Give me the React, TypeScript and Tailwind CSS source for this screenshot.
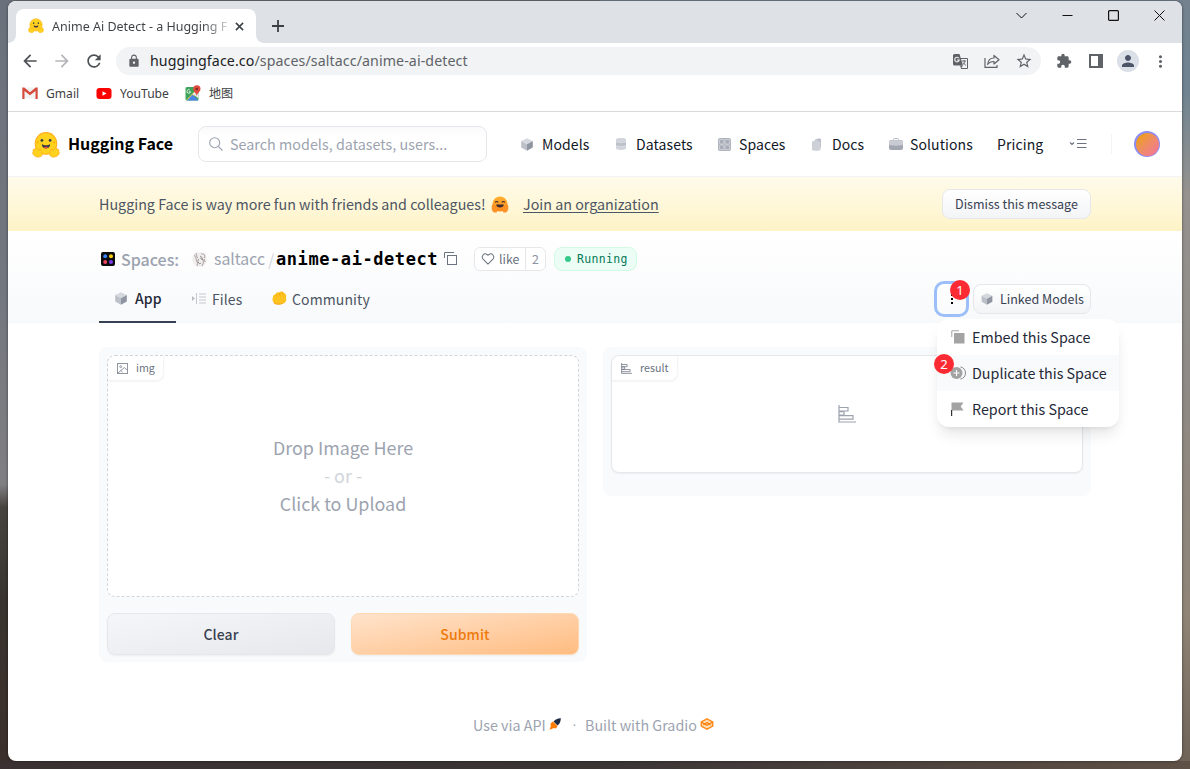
import React from "react";
import {
  MdArrowBack,
  MdArrowForward,
  MdRefresh,
  MdLock,
  MdStarBorder,
  MdExtension,
  MdPerson,
  MdMoreVert,
} from "react-icons/md";

function HugFace({ className }: { className?: string }) {
  return (
    <svg viewBox="0 0 26 24" className={className}>
      <circle cx="13" cy="11" r="10" fill="#ffd21e" stroke="#ffb01f" strokeWidth="1" />
      <circle cx="9.2" cy="8.2" r="1.3" fill="#3a3b45" />
      <circle cx="16.8" cy="8.2" r="1.3" fill="#3a3b45" />
      <circle cx="5.3" cy="10" r="1" fill="#ffad03" />
      <circle cx="20.7" cy="10" r="1" fill="#ffad03" />
      <path d="M9.2 11.600c1.300 1 2.500 1.200 3.800 1.200s2.500-.2 3.800-1.200c.3 2.200-1.300 4.100-3.800 4.100s-4.100-1.900-3.800-4.100z" fill="#3a3b45" />
      <path d="M11.100 15.100c1-1.200 2.900-1.200 3.800 0-1 .8-2.900.8-3.800 0z" fill="#ef4e4e" />
      <path d="M1.200 18.600c-.9-1.600.6-2.500 1.600-1.900-.4-1.700 1.300-2.300 2.100-1.100l1.500 2c.1-1.700 2-1.600 2.200-.1.300 1.800 1.400 2.800.8 4.300-1 2.400-5 2.200-7 .7-1-.8-2.400-2.200-1.200-3.900z" fill="#ffd21e" stroke="#ffb01f" strokeWidth=".8" />
      <path d="M24.800 18.600c.9-1.600-.6-2.500-1.600-1.900.4-1.700-1.300-2.300-2.100-1.100l-1.500 2c-.1-1.700-2-1.600-2.200-.1-.3 1.800-1.400 2.800-.8 4.300 1 2.400 5 2.200 7 .7 1-.8 2.400-2.200 1.200-3.900z" fill="#ffd21e" stroke="#ffb01f" strokeWidth=".8" />
    </svg>
  );
}

function HugEmoji({ className }: { className?: string }) {
  return (
    <svg viewBox="0 0 18 18" className={className}>
      <defs>
        <linearGradient id="hug" x1="0" y1="0" x2="0" y2="1">
          <stop offset="0" stopColor="#ffb02e" />
          <stop offset="1" stopColor="#fb8c1e" />
        </linearGradient>
      </defs>
      <circle cx="9" cy="8.500" r="8" fill="url(#hug)" />
      <path d="M4 6.800c.5-1.300 2.500-1.300 3 0M11 6.800c.5-1.300 2.500-1.300 3 0" fill="none" stroke="#402a32" strokeWidth="1.200" />
      <path d="M5 9h8c0 2-1.800 3.200-4 3.200S5 11 5 9z" fill="#402a32" />
      <path d="M.6 10c1-1 2-.3 2.500.5l2.600 1.600c1.500.5 1.400 4.900-1.500 5.200C1.800 17.500-.2 15 .6 10zM17.400 10c-1-1-2-.3-2.500.5l-2.600 1.600c-1.500.5-1.400 4.900 1.500 5.200 2.400.2 4.400-2.300 3.600-7.300z" fill="#ff9426" stroke="#ee7a1e" strokeWidth=".4" />
    </svg>
  );
}

function Cube({ className }: { className?: string }) {
  return (
    <svg viewBox="0 0 12 13" className={className}>
      <path d="M6 .3 11.800 3.100 6 6.200.2 3.100z" fill="#d5d8de" />
      <path d="M.2 3.100 6 6.200v6.500L.2 9.600z" fill="#bcc0c8" />
      <path d="M11.800 3.100 6 6.200v6.500l5.800-3.100z" fill="#8f95a1" />
    </svg>
  );
}

function DatasetIcon() {
  return (
    <svg viewBox="0 0 12 14" className="h-[14px] w-3">
      <path d="M1 2.500C1 .6 11 .6 11 2.500v9c0 1.900-10 1.900-10 0z" fill="#d1d4da" />
      <path d="M1 5c2 1 8 1 10 0v3.500c-2 1-8 1-10 0z" fill="#bdc1c9" />
      <path d="M1 4.900c2 1 8 1 10 0M1 8.700c2 1 8 1 10 0" stroke="#e3e5e9" fill="none" strokeWidth=".5" />
    </svg>
  );
}

function SpacesGrid() {
  return (
    <svg viewBox="0 0 13 13" className="h-[13px] w-[13px]">
      <rect width="13" height="13" rx="2" fill="#b0b4be" />
      <g fill="#a9adb8" stroke="#d3d6dc" strokeWidth=".8">
        <rect x="1.500" y="1.500" width="4.500" height="4.500" rx=".5" />
        <rect x="7" y="1.500" width="4.500" height="4.500" rx=".5" />
        <rect x="1.500" y="7" width="4.500" height="4.500" rx=".5" />
        <rect x="7" y="7" width="4.500" height="4.500" rx=".5" />
      </g>
    </svg>
  );
}

function DocIcon() {
  return (
    <svg viewBox="0 0 11 13" className="h-[13px] w-[11px]">
      <path d="M4 1.500 8.500.300l1.500 1v8.500L5 11z" fill="#b9bdc6" />
      <path d="M1 3.500 5.500 1.700l4 2.500V12c-1 1-7.500 1-8.500 0z" fill="#cdd0d6" />
    </svg>
  );
}

function CaseIcon() {
  return (
    <svg viewBox="0 0 14 12" className="h-3 w-[14px]">
      <path d="M4.500 3V1.500c0-.6.4-1 1-1h3c.6 0 1 .4 1 1V3" fill="none" stroke="#b1b5be" />
      <rect y="2.300" width="14" height="9.700" rx="2" fill="#a2a7b2" />
      <path d="M0 4.300c0-1.100.9-2 2-2h10c1.100 0 2 .9 2 2v2.500C10 8 4 8 0 6.800z" fill="#c8cbd2" />
    </svg>
  );
}

function CopyIcon() {
  return (
    <svg viewBox="0 0 14 14" className="h-[14px] w-[14px]" fill="none" stroke="#6b7280">
      <rect x="3.500" y="3.500" width="9" height="9" />
      <path d="M.5 6V.5H10" />
    </svg>
  );
}

function Bars({ className }: { className?: string }) {
  return (
    <svg viewBox="0 0 18 18" className={className} fill="none" stroke="currentColor" strokeWidth="1.200">
      <path d="M1 0v17h17" />
      <path d="M1 2.500h9v3.500H1M1 6.600h5v3.500H1M1 10.700h14v3.500H1" />
    </svg>
  );
}

function GmailIcon() {
  return (
    <svg viewBox="0 0 16 12" className="h-3 w-4">
      <rect x="1" y=".5" width="14" height="11" fill="#f2f2f2" />
      <path d="M.300 12V.500h2L8 5.300 13.700.500h2V12h-2.200V4L8 8.300 2.500 4v8z" fill="#d54b3d" />
    </svg>
  );
}

function MapsIcon() {
  return (
    <svg viewBox="0 0 16 16" className="h-4 w-4">
      <rect x=".5" y="2" width="13" height="13.500" rx="1.500" fill="#3fa35b" />
      <path d="M1 15.200 12 4l1.500 1-6 8z" fill="#f7d34c" />
      <path d="m7.500 8.800 6-4v8.700z" fill="#e8eaed" />
      <path d="m2 15.500 5.500-6 6 6z" fill="#4a86e8" />
      <path d="M11.800.3a3.600 3.600 0 0 1 3.700 3.600c0 2.600-3 3.600-3.700 7-.7-3.400-3.600-4.400-3.600-7A3.600 3.600 0 0 1 11.800.3z" fill="#dd4b3e" />
      <circle cx="11.800" cy="3.900" r="1.200" fill="#7d261c" />
      <path d="M4.800 5a1.800 1.800 0 1 0 .7 1.700H4" stroke="#fff" fill="none" strokeWidth=".8" />
    </svg>
  );
}

function TabStrip() {
  return (
    <div className="flex h-[42px] shrink-0 bg-[#dee1e6] pl-2">
      <div className="relative mt-2 flex h-[34px] w-[240px] items-center rounded-t-lg bg-white pl-3">
        <svg className="absolute bottom-0 -left-2 h-2 w-2" viewBox="0 0 8 8"><path d="M8 0v8H0a8 8 0 0 0 8-8z" fill="#fff" /></svg>
        <svg className="absolute -right-2 bottom-0 h-2 w-2" viewBox="0 0 8 8"><path d="M0 0v8h8a8 8 0 0 1-8-8z" fill="#fff" /></svg>
        <HugFace className="mb-px h-[15px] w-4" />
        <span className="mt-[2px] ml-2 w-[176px] bg-gradient-to-r from-[#3c4043] from-[86%] to-[#3c4043]/20 bg-clip-text font-['Noto_Sans'] text-[12.5px] whitespace-nowrap text-transparent">
          Anime Ai Detect - a Hugging F
        </span>
        <svg viewBox="0 0 10 10" className="ml-[7px] h-[9px] w-[9px]"><path d="m1 1 8 8M9 1 1 9" stroke="#3c4043" strokeWidth="1.700" /></svg>
      </div>
      <svg viewBox="0 0 12 12" className="mt-[19px] ml-4 h-3 w-3"><path d="M6 0v12M0 6h12" stroke="#3c4043" strokeWidth="1.800" /></svg>
      <div className="mt-[9px] mr-[17px] ml-auto flex h-[11px] items-center gap-[35px] text-[#111]">
        <svg viewBox="0 0 11 11" className="h-[11px] w-[11px]" fill="none" stroke="currentColor"><path d="m.5 3 5 5 5-5" /></svg>
        <svg viewBox="0 0 11 11" className="h-[11px] w-[11px]" fill="none" stroke="currentColor"><path d="M.5 5.500h10" /></svg>
        <svg viewBox="0 0 11 11" className="h-[11px] w-[11px]" fill="none" stroke="currentColor"><rect x=".6" y=".6" width="9.800" height="9.800" rx="1" strokeWidth="1.200" /></svg>
        <svg viewBox="0 0 11 11" className="h-[11px] w-[11px]" fill="none" stroke="currentColor"><path d="m.5.5 10 10m0-10-10 10" /></svg>
      </div>
    </div>
  );
}

function Toolbar() {
  return (
    <div className="flex h-[36px] shrink-0 items-center pl-3 text-[#4d5156]">
      <MdArrowBack className="h-5 w-5" />
      <MdArrowForward className="ml-3 h-5 w-5 text-[#b4b6b9]" />
      <MdRefresh className="ml-3 h-5 w-5" />
      <div className="ml-3 flex h-7 w-[925px] items-center rounded-full bg-[#f1f3f4] pl-[11px]">
        <MdLock className="mb-px h-[14px] w-[14px] text-[#5f6368]" />
        <span className="ml-[9px] font-['Noto_Sans'] text-[14.2px] tracking-[0.100px] whitespace-nowrap text-[#5f6368]">
          <span className="text-[#202124]">huggingface.co</span>/spaces/saltacc/anime-ai-detect
        </span>
        <div className="mr-2 ml-auto flex items-center gap-4 text-[#5f6368]">
          <svg viewBox="0 0 15 15" className="h-[15px] w-[15px]">
            <path d="M6 4.500h8.500v10H8" fill="none" stroke="currentColor" />
            <path d="M1.500 0h5L10 11.500H1.500A1.500 1.500 0 0 1 0 10V1.500A1.500 1.500 0 0 1 1.500 0z" fill="currentColor" />
            <path d="M6 4.300A2.300 2.300 0 1 0 6.300 6H4" fill="none" stroke="#f1f3f4" strokeWidth="1.100" />
            <path d="M9 7h4M11 6v1m1 0c-.3 2-1.300 3-2 3.500M9.800 8.500 13 11.500" fill="none" stroke="currentColor" strokeWidth=".9" />
            <path d="M7 11.500h3l-2 3z" fill="currentColor" />
          </svg>
          <svg viewBox="0 0 16 16" className="h-4 w-4" fill="none" stroke="currentColor" strokeWidth="1.200">
            <path d="M1 5v9.300h12V12" />
            <path d="M10 2.500V5C6 5 4 7.500 3.700 11.500 5.200 9.300 7 8.500 10 8.500V11l5-4.300z" strokeLinejoin="round" />
          </svg>
          <MdStarBorder className="-ml-px h-[18px] w-[18px]" />
        </div>
      </div>
      <div className="ml-[15px] flex items-center text-[#5f6368]">
        <MdExtension className="h-4 w-4" />
        <svg viewBox="0 0 14 14" className="ml-[17px] h-[14px] w-[14px]"><path d="M0 0h14v14H0zM2 2v10h7V2z" fill="currentColor" fillRule="evenodd" /></svg>
        <span className="ml-[14px] flex h-[22px] w-[22px] items-center justify-center rounded-full bg-[#dadfe8] text-[#4b5468]">
          <MdPerson className="h-[18px] w-[18px]" />
        </span>
        <MdMoreVert className="ml-3 h-[19px] w-[19px]" />
      </div>
    </div>
  );
}

function Bookmarks() {
  return (
    <div className="flex h-[33px] shrink-0 items-center border-b border-[#d8dadd] pb-[4px] pl-[14px] font-['Noto_Sans','Noto_Sans_CJK_SC',sans-serif] text-[12.100px] text-[#3c4043]">
      <GmailIcon />
      <span className="ml-2 w-[50px] pt-[2px]">Gmail</span>
      <svg viewBox="0 0 15 11" className="h-[11px] w-4"><rect width="15" height="11" rx="3" fill="#f00" /><path d="m6 3.200 4 2.300-4 2.300z" fill="#fff" /></svg>
      <span className="ml-2 w-[65px] pt-[2px] whitespace-nowrap">YouTube</span>
      <MapsIcon />
      <span className="ml-2 pt-[2px]">地图</span>
    </div>
  );
}

function NavItem({ icon, label, className }: { icon?: React.ReactNode; label: string; className: string }) {
  return (
    <div className={"flex shrink-0 items-center whitespace-nowrap " + className}>
      {icon && <span className="flex w-[21px] items-center">{icon}</span>}
      {label}
    </div>
  );
}

function SiteHeader() {
  return (
    <header className="flex h-[65px] shrink-0 items-center border-b border-gray-100 pl-6 text-sm text-[#111827]">
      <HugFace className="h-[27px] w-[28px]" />
      <span className="mb-[2px] ml-2 w-[130px] text-[16px] font-bold whitespace-nowrap text-black">Hugging Face</span>
      <div className="flex h-9 w-[289px] items-center rounded-lg border border-gray-200 bg-gradient-to-b from-[#f9fafb] to-white to-30% pl-[10px] text-[#9ca3af]">
        <svg viewBox="0 0 14 14" className="h-[14px] w-[14px]" fill="none" stroke="currentColor" strokeWidth="1.100"><circle cx="5.700" cy="5.700" r="5" /><path d="m9.300 9.300 4.200 4.200" /></svg>
        <span className="ml-[7px] text-[14.300px] tracking-[0.03px] whitespace-nowrap">Search models, datasets, users...</span>
      </div>
      <nav className="ml-[34px] flex items-center tracking-[0.100px]">
        <NavItem icon={<Cube className="h-[13px] w-3" />} label="Models" className="w-[94px]" />
        <NavItem icon={<DatasetIcon />} label="Datasets" className="w-[103px]" />
        <NavItem icon={<SpacesGrid />} label="Spaces" className="w-[93px]" />
        <NavItem icon={<DocIcon />} label="Docs" className="w-[78px]" />
        <NavItem icon={<CaseIcon />} label="Solutions" className="w-[108px]" />
        <NavItem label="Pricing" className="w-[72px]" />
      </nav>
      <svg viewBox="0 0 18 10" className="h-[10px] w-[18px]" fill="none" stroke="#6b7280"><path d="m1 3.500 2 2 2-2M8 .5h9.500M8 4.500h9.500M8 8.500h9.500" strokeWidth="1.100" /></svg>
      <span className="ml-6 h-5 w-px bg-gray-100" />
      <span className="ml-[22px] flex h-[26px] w-[26px] rounded-full bg-[#8b8cf5] p-[1.500px]">
        <span className="flex-1 rounded-full bg-gradient-to-br from-[#ee9a22] from-20% to-[#f2709c]" />
      </span>
    </header>
  );
}

function Banner() {
  return (
    <div className="flex h-[54px] shrink-0 items-center bg-gradient-to-b from-[#fffbeb] to-[#fef3c7] px-[91px] text-[14.300px] text-[#4b5563]">
      <span className="w-[388px] whitespace-nowrap">Hugging Face is way more fun with friends and colleagues!</span>
      <HugEmoji className="ml-[4px] h-[17px] w-[18px]" />
      <span className="ml-[14px] whitespace-nowrap underline underline-offset-2">Join an organization</span>
      <button className="ml-auto h-[30px] w-[149px] rounded-lg border border-gray-200 bg-gradient-to-b from-white to-gray-100 text-[12.500px] whitespace-nowrap text-[#374151]">
        Dismiss this message
      </button>
    </div>
  );
}

function SpaceMenu() {
  return (
    <div className="absolute top-[38px] left-[3px] z-10 w-[182px] rounded-xl bg-white text-[14.300px] text-[#1f2937] shadow-lg">
      <div className="flex h-9 items-center pl-[14px]">
        <svg viewBox="0 0 14 14" className="h-[14px] w-[14px]"><rect x="3" y="3" width="10.500" height="10.500" fill="#a3a3a3" /><path d="M.8 7V.8H8" fill="none" stroke="#a3a3a3" /></svg>
        <span className="ml-[7px] whitespace-nowrap">Embed this Space</span>
      </div>
      <div className="relative flex h-9 items-center bg-gray-50 pl-[13px]">
        <svg viewBox="0 0 16 14" className="h-[14px] w-[16px]"><circle cx="6.500" cy="7" r="6" fill="#a3a3a3" /><path d="M6.500 4v6M3.500 7h6" stroke="#fff" strokeWidth="1.100" /><path d="M10.500 1c2.700.3 5 2.600 5 6s-2.300 5.700-5 6" fill="none" stroke="#888" /></svg>
        <span className="ml-[6px] whitespace-nowrap">Duplicate this Space</span>
        <Badge n="2" className="-top-px -left-[3px]" />
      </div>
      <div className="flex h-9 items-center pl-[14px]">
        <svg viewBox="0 0 14 14" className="h-[14px] w-[14px]"><path d="M.5.500h12L9.700 4.500l2.800 4H.5z" fill="#a3a3a3" /><path d="M.6 8v6" stroke="#333" strokeWidth="1.200" /></svg>
        <span className="ml-[7px] whitespace-nowrap">Report this Space</span>
      </div>
    </div>
  );
}

function Badge({ n, className }: { n: string; className: string }) {
  return (
    <span className={"absolute z-20 flex h-5 w-5 items-center justify-center rounded-full bg-[#fc2b33] font-['Noto_Sans'] text-[13px] text-white " + className}>
      {n}
    </span>
  );
}

function SpaceHeader() {
  return (
    <div className="flex h-[92px] shrink-0 flex-col bg-gradient-to-b from-white to-[#f8f9fb] px-[91px]">
      <div className="mt-4 flex h-6 items-center">
        <svg viewBox="0 0 14 14" className="ml-[2px] h-[14px] w-[14px]">
          <rect width="14" height="14" rx="2" fill="#0b0b0b" />
          <circle cx="4.200" cy="4.200" r="2" fill="#3b82f6" />
          <circle cx="10" cy="4.200" r="2" fill="#facc15" />
          <circle cx="4.200" cy="9.900" r="2" fill="#ef4464" />
          <circle cx="10" cy="9.900" r="2" fill="#7c3aed" />
        </svg>
        <span className="mb-px ml-[6px] w-[72px] text-[16px] font-medium whitespace-nowrap text-[#9ca3af]">Spaces:</span>
        <svg viewBox="0 0 15 15" className="-ml-px h-[15px] w-[15px]">
          <circle cx="7.500" cy="7.500" r="7.300" fill="#f1eeee" />
          <path d="M2 3c2 1 2 4 3 7M4 1c1 2 0 4 2 5M9 2c3-1 5 2 3 4M8 6c3 1 5 3 2 8M5 14c1-2 0-5 2-7M12 7l1 3" stroke="#b7afb0" fill="none" strokeWidth="1.200" />
          <path d="M8 4c1 1 3 1 2 4M6 10c1 2 2 2 3 1" stroke="#655d60" fill="none" strokeWidth=".7" />
        </svg>
        <span className="ml-[7px] w-[54px] text-[15.800px] whitespace-nowrap text-[#9ca3af]">saltacc</span>
        <span className="w-[8px] text-[16px] text-[#d1d5db]">/</span>
        <span className="mt-[2px] w-[168px] font-['DejaVu_Sans_Mono'] text-[17px] font-bold tracking-[0.57px] whitespace-nowrap text-black">anime-ai-detect</span>
        <CopyIcon />
        <div className="ml-4 flex h-6 w-[72px] items-center rounded-md border border-gray-200 bg-white text-[12.400px] text-[#6b7280]">
          <svg viewBox="0 0 14 13" className="ml-[6px] h-3 w-[14px]" fill="none" stroke="currentColor" strokeWidth="1.100"><path d="M7 12 1.700 6.600C-.8 3.800 2.600-.9 6 1.600l1 1 1-1c3.400-2.500 6.800 2.200 4.300 5z" /></svg>
          <span className="ml-1 w-[26px]">like</span>
          <span className="flex h-full flex-1 items-center justify-center border-l border-gray-200 text-[#8b92a0]">2</span>
        </div>
        <div className="ml-2 flex h-6 w-[83px] items-center rounded-lg border border-[#d1fae5] bg-[#ecfdf5] font-['DejaVu_Sans_Mono'] text-[11.500px] tracking-[0.33px] text-[#047857]">
          <span className="mr-[6px] ml-[10px] h-[6px] w-[6px] shrink-0 rounded-full bg-[#34c88a]" />
          <span className="mt-[2px]">Running</span>
        </div>
      </div>
      <div className="mt-[2px] flex h-[50px] text-sm tracking-[0.080px] text-[#4b5563]">
        <div className="flex w-[77px] items-center border-b-2 border-[#374151] pt-[2px] pl-4 font-medium text-[#1f2937]">
          <Cube className="h-[13px] w-3" />
          <span className="ml-2">App</span>
        </div>
        <div className="flex w-[81px] items-center pt-[1px] pl-4">
          <svg viewBox="0 0 14 11" className="h-[11px] w-[14px]"><path d="M0 3v5l3-2.500z" fill="#b8bcc4" /><path d="M4.500 0v11M7 1h7M7 4h7M7 7h7M7 10h7" stroke="#c4c7ce" fill="none" /></svg>
          <span className="ml-[6px]">Files</span>
        </div>
        <div className="flex items-center pt-[1px] pl-[15px]">
          <svg viewBox="0 0 15 14" className="mb-px h-[14px] w-[15px]"><path d="M1 6c0-2 1.500-2.500 2.300-2.500C4 1.500 6 1 7 1.500 8.500 0 11 0 12 2c2 .5 2.600 3 2 5 1 3-1 5.500-4 6-3 1-7 1-8.500-1.500C.5 10 0 8 1 6z" fill="#fcc21f" /><path d="m4 3.500 1 2M7.200 2l.8 2.500M10.500 1.800l.8 2M2 12c2 1.500 6 1.500 8.500.5" fill="none" stroke="#f59a1d" strokeWidth=".8" /></svg>
          <span className="ml-[5px] tracking-[0.120px]">Community</span>
        </div>
        <div className="relative mt-2 mr-0 ml-auto flex h-9 tracking-normal">
          <button className="flex h-[36px] w-[35px] items-center justify-center rounded-[10px] border-[3px] border-[#9dbff9] bg-gradient-to-b from-white to-gray-50">
            <svg viewBox="0 0 4 14" className="h-[14px] w-1 fill-black"><rect x="1" y="2" width="2" height="2" /><rect x="1" y="6" width="2" height="2" /><rect x="1" y="10" width="2" height="2" /></svg>
          </button>
          <Badge n="1" className="-top-[1px] left-[16px]" />
          <button className="mt-[3px] ml-1 flex h-[30px] w-[118px] items-center rounded-lg border border-gray-200 bg-gradient-to-b from-white to-gray-100 pl-[7px] text-[12.500px] text-[#374151]">
            <Cube className="h-3 w-3" />
            <span className="ml-[7px] whitespace-nowrap">Linked Models</span>
          </button>
          <SpaceMenu />
        </div>
      </div>
    </div>
  );
}

function BlockLabel({ icon, label, className }: { icon: React.ReactNode; label: string; className: string }) {
  return (
    <div className={"flex h-[25px] items-center rounded-tl-lg rounded-br-lg border-r border-b border-gray-100 pl-[9px] text-[10.700px] text-[#6b7280] shadow-xs " + className}>
      {icon}
      <span className="ml-2">{label}</span>
    </div>
  );
}

function Demo() {
  return (
    <div className="mt-6 flex items-start gap-4 px-[91px]">
      <div className="h-[315px] w-[488px] rounded-lg bg-[#f9fafb] p-2">
        <div className="flex h-[242px] flex-col rounded-lg border border-dashed border-[#d1d5db] bg-white">
          <BlockLabel
            className="w-[56px]"
            icon={<svg viewBox="0 0 12 12" className="h-[11px] w-[11px] opacity-80" fill="none" stroke="currentColor"><rect x=".5" y=".5" width="11" height="11" /><circle cx="4" cy="4" r="1" /><path d="m1 11 7-6 3.500 3M4 8l2 2" /></svg>}
            label="img"
          />
          <div className="mt-[52px] flex flex-col items-center text-[17.900px] leading-7 text-[#9ca3af]">
            <span>Drop Image Here</span>
            <span className="text-[#d1d5db]">- or -</span>
            <span>Click to Upload</span>
          </div>
        </div>
        <div className="mt-4 flex gap-4 text-sm font-medium tracking-[0.100px]">
          <button className="h-[42px] flex-1 rounded-lg border border-gray-200 bg-gradient-to-br from-[#f5f6f8] to-[#e7e8ed] text-[#374151] shadow-xs">Clear</button>
          <button className="h-[42px] flex-1 rounded-lg border border-[#ffd9b3] bg-gradient-to-br from-[#ffe3cb] to-[#ffbc80] text-[#ee7a0c] shadow-xs">Submit</button>
        </div>
      </div>
      <div className="h-[149px] w-[488px] rounded-lg bg-[#f9fafb] p-2">
        <div className="h-[118px] rounded-lg border border-gray-200 bg-white shadow-xs">
          <BlockLabel className="w-[66px]" icon={<Bars className="h-[11px] w-[11px]" />} label="result" />
          <div className="mt-[24px] flex justify-center text-[#9ca3af]">
            <Bars className="h-[18px] w-[18px]" />
          </div>
        </div>
      </div>
    </div>
  );
}

function Footer() {
  return (
    <footer className="mt-[51px] flex h-6 items-center pl-[465px] text-[14.300px] whitespace-nowrap text-[#9ca3af]">
      <span className="w-[75px]">Use via API</span>
      <svg viewBox="0 0 12 12" className="mb-[2px] ml-px h-3 w-3"><path d="M4.500 3.500C6 1.500 9 0 11.800.200 12 3 10.500 6 8.500 7.500z" fill="#1f2a44" /><path d="m1.500 5.500 2.500-2L8.500 8 7 10.500 5 10l-4.500 1.800L1.800 8z" fill="#ff7c00" /></svg>
      <span className="ml-[11px] flex w-[5px] justify-center font-['Liberation_Sans']">·</span>
      <span className="ml-[8px] w-[113px]">Built with Gradio</span>
      <svg viewBox="0 0 13 12" className="mb-[2px] ml-[2px] h-3 w-[14px]"><path d="M6.500.8 12.200 4v4L6.500 11.200.8 8V4z" fill="#ffe2bd" stroke="#ff8a1a" strokeWidth="1.400" /><path d="m1 4.200 5.500 3 5.500-3M2.500 7l4-2.500 4 2.500" stroke="#ff7c00" fill="none" strokeWidth="1.200" /></svg>
    </footer>
  );
}

export default function App() {
  return (
    <div className="h-[769px] w-[1190px] overflow-hidden bg-[linear-gradient(180deg,#6b717c_0%,#73777f_38%,#807f82_63%,#47443f_66%,#39342f_78%,#3c2f2c_100%)]">
      <div className="h-full w-full bg-[linear-gradient(180deg,#74828f_0%,#6f8491_12%,#95928f_25%,#8f8a85_50%,#8f8476_80%,#6e6156_100%)] [clip-path:inset(0_0_0_600px)]" />
      <div className="relative -mt-2 h-2 w-full bg-gradient-to-r from-[#3b3133] via-[#3a3435] to-[#5f5146]" />
      <div className="-mt-[768px] w-full pl-2">
        <div className="relative flex h-[760px] w-[1174px] flex-col overflow-hidden rounded-lg bg-white font-['Noto_Sans_CJK_SC',sans-serif] shadow-[0_0_3px_rgba(0,0,0,0.5)]">
          <TabStrip />
          <Toolbar />
          <Bookmarks />
          <SiteHeader />
          <Banner />
          <SpaceHeader />
          <Demo />
          <Footer />
        </div>
      </div>
    </div>
  );
}
